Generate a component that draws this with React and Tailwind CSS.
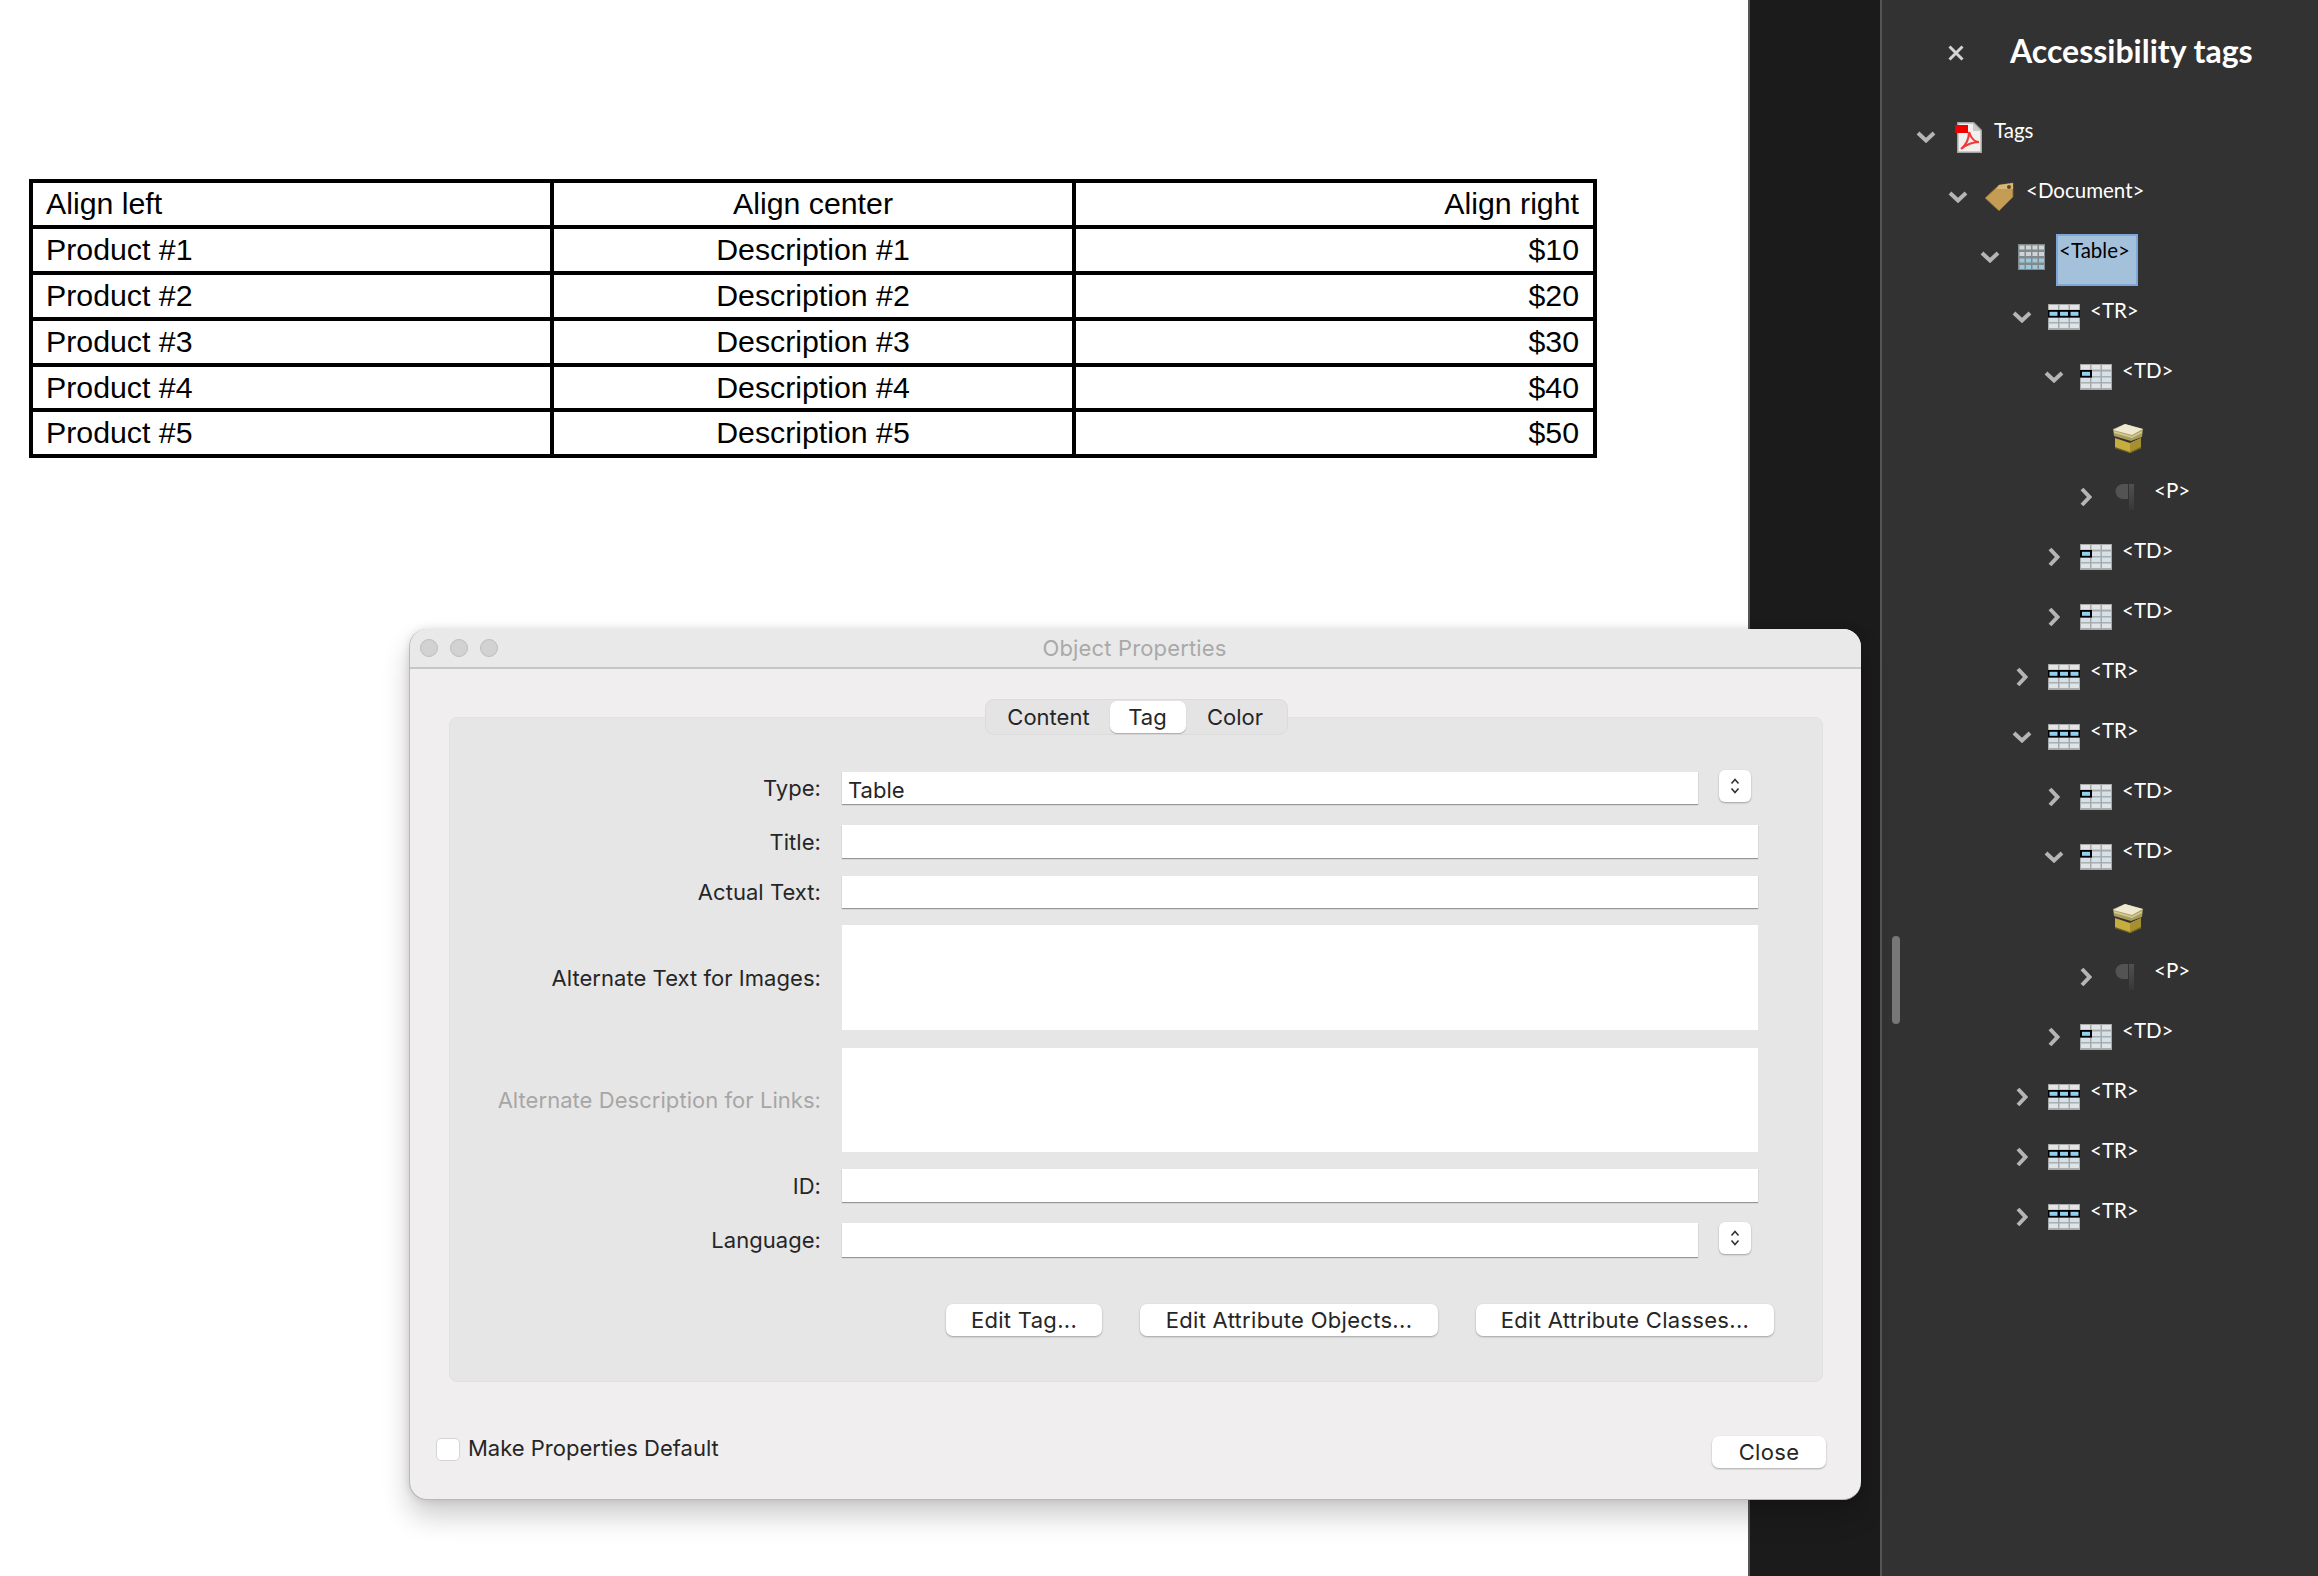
const CELLS_X = [1, 11.5, 22];
const CELLS_Y = [1, 7.5, 13.5, 19.5];

function GridIcon({ mode }) {
  return (
    <svg width="32" height="26" viewBox="0 0 32 26">
      <rect width="32" height="26" fill="#a6a9aa" />
      {CELLS_Y.map((y, r) =>
        CELLS_X.map((x, c) => (
          <rect key={`${r}${c}`} x={x} y={y} width="9" height="4.6" fill={r === 0 ? "#e4e4e4" : r === 3 ? "#dfe5e7" : "#d3e2e9"} />
        ))
      )}
      {mode === "tr" && (
        <>
          <rect y="6" width="32" height="7.6" fill="#000" />
          {CELLS_X.map((x) => (
            <rect key={x} x={x + 0.5} y="7.8" width="8" height="4" fill="#8fd0ef" />
          ))}
        </>
      )}
      {mode === "td" && (
        <>
          <rect y="6" width="12" height="7.6" fill="#000" />
          <rect x="2" y="7.8" width="8" height="4" fill="#8fd0ef" />
        </>
      )}
    </svg>
  );
}

function TableIcon() {
  const xs = [1.5, 8, 14.5, 21];
  const ys = [1.5, 8, 14.5, 21];
  return (
    <svg className="ml-[2px]" width="27" height="26" viewBox="0 0 27 26">
      <rect width="27" height="26" fill="#84898b" />
      {ys.map((y, r) =>
        xs.map((x) => (
          <rect key={`${r}${x}`} x={x} y={y} width="5" height="4" fill={r < 2 ? "#cfd5d7" : "#9cc8de"} />
        ))
      )}
    </svg>
  );
}

function PdfIcon() {
  return (
    <svg className="ml-[3px]" width="28" height="31" viewBox="0 0 28 31">
      <path d="M2 0H19L27 8V31H2Z" fill="#a4a4a4" />
      <path d="M3.5 1.5H18L25.500 9V29.500H3.500Z" fill="#f1f0ef" />
      <path d="M18 1L26 9H18Z" fill="#c9c9c9" />
      <rect x="0" y="3" width="13" height="8" fill="#f00000" />
      <path d="M14 10C14 17 11 23 6 27C11 23 18 20 24 20C20 20 16 16 14 10Z" fill="none" stroke="#f03a3a" strokeWidth="2.200" />
    </svg>
  );
}

function TagIcon() {
  return (
    <svg width="30" height="30" viewBox="0 0 30 30">
      <path d="M1 16L15 3L29 1L29 15L15 29Z" fill="#c49c56" stroke="#7d6226" strokeWidth="0.800" />
      <path d="M15 3L29 1L29 7L12 7Z" fill="#d8b678" />
      <circle cx="25" cy="5" r="2" fill="#5b4720" />
    </svg>
  );
}

function BoxIcon() {
  return (
    <svg width="32" height="30" viewBox="0 0 32 30">
      <path d="M3 15L18 20L29 15L29 25L18 30L3 25Z" fill="#c7ad3f" />
      <path d="M18 20L29 15L29 25L18 30Z" fill="#a48f31" />
      <path d="M3 24L18 29L29 24L29 25.500L18 30L3 25.500Z" fill="#6f5d1c" />
      <path d="M1 6L13 1L31 6L30 14L19 18L2 13Z" fill="#a99c5c" />
      <path d="M1 7L13 1L31 6L20 12Z" fill="#efe9d2" />
      <path d="M2 8L20 13L30 8L30 10L20 15L2 10Z" fill="#cfc694" />
    </svg>
  );
}

function PilcrowIcon() {
  return (
    <svg className="ml-[3px]" width="24" height="28" viewBox="0 0 24 28">
      <defs>
        <linearGradient id="stem" x1="0" y1="0" x2="0" y2="1">
          <stop offset="0" stopColor="#505050" />
          <stop offset="1" stopColor="#383838" />
        </linearGradient>
      </defs>
      <path d="M13 1H8A7 7 0 0 0 8 16H13Z" fill="#535353" />
      <rect x="14" y="1" width="5" height="26" fill="url(#stem)" />
    </svg>
  );
}

function Chevron({ open }) {
  return open ? (
    <svg width="20" height="12" viewBox="0 0 20 12">
      <polyline points="2,2 10,9.500 18,2" fill="none" stroke="#b5b5b5" strokeWidth="4" />
    </svg>
  ) : (
    <svg width="12" height="20" viewBox="0 0 12 20">
      <polyline points="2,2 9.500,10 2,18" fill="none" stroke="#b5b5b5" strokeWidth="4" />
    </svg>
  );
}

const ICONS = {
  pdf: <PdfIcon />,
  tag: <TagIcon />,
  table: <TableIcon />,
  tr: <GridIcon mode="tr" />,
  td: <GridIcon mode="td" />,
  box: <BoxIcon />,
  p: <PilcrowIcon />,
};

const TREE = [
  { level: 0, icon: "pdf", label: "Tags", open: true },
  { level: 1, icon: "tag", label: "<Document>", open: true },
  { level: 2, icon: "table", label: "<Table>", open: true, selected: true },
  { level: 3, icon: "tr", label: "<TR>", open: true },
  { level: 4, icon: "td", label: "<TD>", open: true },
  { level: 5, icon: "box" },
  { level: 5, icon: "p", label: "<P>", open: false },
  { level: 4, icon: "td", label: "<TD>", open: false },
  { level: 4, icon: "td", label: "<TD>", open: false },
  { level: 3, icon: "tr", label: "<TR>", open: false },
  { level: 3, icon: "tr", label: "<TR>", open: true },
  { level: 4, icon: "td", label: "<TD>", open: false },
  { level: 4, icon: "td", label: "<TD>", open: true },
  { level: 5, icon: "box" },
  { level: 5, icon: "p", label: "<P>", open: false },
  { level: 4, icon: "td", label: "<TD>", open: false },
  { level: 3, icon: "tr", label: "<TR>", open: false },
  { level: 3, icon: "tr", label: "<TR>", open: false },
  { level: 3, icon: "tr", label: "<TR>", open: false },
];

function TreeRow({ level, icon, label, open, selected }) {
  return (
    <div className="flex h-[60px] items-center" style={{ paddingLeft: 34 + level * 32 }}>
      <div className="flex w-[36px] shrink-0">
        {label && (
          <div className="flex w-[20px] justify-center">
            <Chevron open={open} />
          </div>
        )}
      </div>
      <div className={`flex w-[42px] shrink-0 ${label ? "" : "mt-[2px]"}`}>{ICONS[icon]}</div>
      {label &&
        (selected ? (
          <div className="ml-[-2px] mt-[6px] h-[52px] w-[82px] border-2 border-[#7fa6d8] bg-[#a4c1dc] pl-[1px] pt-[2px] text-[20.5px] leading-[24px] text-[#000]">
            {label}
          </div>
        ) : (
          <div className="mb-[14px] text-[20.5px] leading-[24px] text-white">{label}</div>
        ))}
    </div>
  );
}

function Field({ label, muted, h, mt, short, flat }) {
  return (
    <div className="flex items-center" style={{ height: h, marginTop: mt }}>
      <div className={`w-[371px] text-right tracking-[0.05px] ${muted ? "text-[#a6a6a6]" : "text-[#262626]"}`}>{label}</div>
      <div className={`ml-[21px] h-full bg-white ${flat ? "" : "shadow-[0_1px_1px_rgba(0,0,0,0.35)]"} ${short ? "w-[856px]" : "w-[916px]"}`}>
        {label === "Type:" && <div className="pl-[6px] pt-[3px] leading-[30px] text-[#262626]">Table</div>}
      </div>
      {short && (
        <div className="ml-[21px] mt-[-4px] flex h-[32px] w-[32px] items-center justify-center rounded-[6px] bg-white shadow-[0_1px_2px_rgba(0,0,0,0.3)]">
          <svg width="10" height="16" viewBox="0 0 10 16">
            <polyline points="1.500,5.500 5,1.500 8.500,5.500" fill="none" stroke="#333" strokeWidth="1.600" />
            <polyline points="1.500,10.500 5,14.500 8.500,10.500" fill="none" stroke="#333" strokeWidth="1.600" />
          </svg>
        </div>
      )}
    </div>
  );
}

function MacButton({ className, children }) {
  return (
    <div className={`flex h-[32px] items-center justify-center rounded-[7px] bg-white tracking-[0.3px] text-[#262626] shadow-[0_1px_2px_rgba(0,0,0,0.3)] ${className}`}>
      {children}
    </div>
  );
}

const ROWS = [
  ["Align left", "Align center", "Align right"],
  ["Product #1", "Description #1", "$10"],
  ["Product #2", "Description #2", "$20"],
  ["Product #3", "Description #3", "$30"],
  ["Product #4", "Description #4", "$40"],
  ["Product #5", "Description #5", "$50"],
];

function Dialog() {
  return (
    <div className="absolute left-[409px] top-[629px] h-[871px] w-[1452px] rounded-[18px] border-b border-l border-[#b9b8b9] bg-[#f0eeef] font-['Inter',sans-serif] text-[22px] leading-[28px] shadow-[0_16px_28px_rgba(0,0,0,0.2),0_0_8px_rgba(0,0,0,0.12)]">
      <div className="flex h-[40px] items-center rounded-t-[18px] border-b-2 border-[#c6c6c6] bg-[#e9e9e9] pl-[10px]">
        <div className="flex gap-[12px]">
          <div className="h-[18px] w-[18px] rounded-full border border-[#bdbdbd] bg-[#d2d2d2]" />
          <div className="h-[18px] w-[18px] rounded-full border border-[#bdbdbd] bg-[#d2d2d2]" />
          <div className="h-[18px] w-[18px] rounded-full border border-[#bdbdbd] bg-[#d2d2d2]" />
        </div>
        <div className="ml-[-12px] flex-1 pr-[78px] text-center tracking-[0.15px] text-[#a9a9a9]">Object Properties</div>
      </div>
      <div className="ml-[39px] mr-[38px] mt-[48px] h-[665px] rounded-[8px] border border-[#e1e1e1] bg-[#e6e6e6]">
        <div className="mx-auto mt-[-19px] flex h-[36px] w-[303px] items-center rounded-[9px] border border-[#dcdcdc] bg-[#e5e4e5] px-[2px] pb-[1px] text-[#262626]">
          <div className="w-[122px] text-center">Content</div>
          <div className="flex h-[32px] w-[76px] items-center justify-center rounded-[7px] bg-white shadow-[0_1px_1px_rgba(0,0,0,0.25)]">Tag</div>
          <div className="flex-1 text-center">Color</div>
        </div>
        <Field label="Type:" h={32} mt={37} short />
        <Field label="Title:" h={33} mt={21} />
        <Field label="Actual Text:" h={32} mt={18} />
        <Field label="Alternate Text for Images:" h={105} mt={17} flat />
        <Field label="Alternate Description for Links:" muted h={104} mt={18} flat />
        <Field label="ID:" h={33} mt={17} />
        <Field label="Language:" h={34} mt={21} short />
        <div className="mt-[47px] flex justify-end gap-[38px] pr-[48px]">
          <MacButton className="w-[156px]">Edit Tag...</MacButton>
          <MacButton className="w-[298px]">Edit Attribute Objects...</MacButton>
          <MacButton className="w-[298px]">Edit Attribute Classes...</MacButton>
        </div>
      </div>
      <div className="mt-[54px] flex items-start justify-between pl-[26px] pr-[35px]">
        <div className="flex items-center gap-[8px]">
          <div className="h-[23px] w-[24px] rounded-[5px] border border-[#d4d4d4] bg-white" />
          <div className="mt-[-2px] text-[#262626]">Make Properties Default</div>
        </div>
        <MacButton className="w-[114px]">Close</MacButton>
      </div>
    </div>
  );
}

export default function App() {
  return (
    <div className="relative flex h-[1576px] w-[2318px] overflow-hidden bg-white">
      <div className="w-[1748px] shrink-0 bg-white pl-[29px] pt-[179px]">
        <table className="w-[1568px] table-fixed border-collapse font-['Liberation_Sans',sans-serif] text-[30.3px] leading-[38px] text-black">
          <tbody>
            {ROWS.map((r, i) => (
              <tr key={r[0]} className={i === 4 ? "h-[45px]" : "h-[46px]"}>
                <td className="border-[4px] border-black px-[13px] py-0 text-left">{r[0]}</td>
                <td className="border-[4px] border-black px-[14px] py-0 text-center">{r[1]}</td>
                <td className="border-[4px] border-black px-[14px] py-0 text-right">{r[2]}</td>
              </tr>
            ))}
          </tbody>
        </table>
      </div>
      <div className="w-[132px] shrink-0 border-l-2 border-[#555] bg-[#1b1b1b]" />
      <div className="relative flex-1 border-l-2 border-[#555] bg-[#323232] font-['Lato',sans-serif]">
        <div className="flex h-[107px] items-center pl-[66px]">
          <svg className="mb-[2px]" width="16" height="16" viewBox="0 0 16 16">
            <path d="M1.500 1.500L14.500 14.500M14.500 1.500L1.500 14.500" stroke="#d4d4d4" strokeWidth="3" />
          </svg>
          <div className="ml-[46px] mb-[6px] text-[32px] font-bold leading-[44px] text-white">Accessibility tags</div>
        </div>
        {TREE.map((row, i) => (
          <TreeRow key={i} {...row} />
        ))}
        <div className="absolute left-[10px] top-[936px] h-[88px] w-[8px] rounded-full bg-[#777]" />
      </div>
      <Dialog />
    </div>
  );
}
